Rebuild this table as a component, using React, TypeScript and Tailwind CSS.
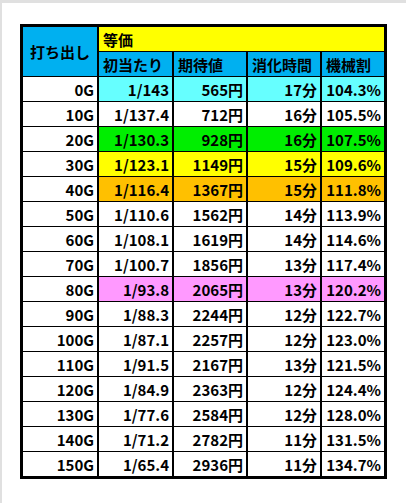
import React from "react";

type Row = { g: string; a: string; b: string; c: string; d: string; bg?: string };

const rows: Row[] = [
  { g: "0G", a: "1/143", b: "565円", c: "17分", d: "104.3%", bg: "bg-[#66ffff]" },
  { g: "10G", a: "1/137.4", b: "712円", c: "16分", d: "105.5%" },
  { g: "20G", a: "1/130.3", b: "928円", c: "16分", d: "107.5%", bg: "bg-[#00ee00]" },
  { g: "30G", a: "1/123.1", b: "1149円", c: "15分", d: "109.6%", bg: "bg-[#ffff00]" },
  { g: "40G", a: "1/116.4", b: "1367円", c: "15分", d: "111.8%", bg: "bg-[#ffc000]" },
  { g: "50G", a: "1/110.6", b: "1562円", c: "14分", d: "113.9%" },
  { g: "60G", a: "1/108.1", b: "1619円", c: "14分", d: "114.6%" },
  { g: "70G", a: "1/100.7", b: "1856円", c: "13分", d: "117.4%" },
  { g: "80G", a: "1/93.8", b: "2065円", c: "13分", d: "120.2%", bg: "bg-[#ff99ff]" },
  { g: "90G", a: "1/88.3", b: "2244円", c: "12分", d: "122.7%" },
  { g: "100G", a: "1/87.1", b: "2257円", c: "12分", d: "123.0%" },
  { g: "110G", a: "1/91.5", b: "2167円", c: "13分", d: "121.5%" },
  { g: "120G", a: "1/84.9", b: "2363円", c: "12分", d: "124.4%" },
  { g: "130G", a: "1/77.6", b: "2584円", c: "12分", d: "128.0%" },
  { g: "140G", a: "1/71.2", b: "2782円", c: "11分", d: "131.5%" },
  { g: "150G", a: "1/65.4", b: "2936円", c: "11分", d: "134.7%" },
];

const cell = "h-[24px] flex items-center justify-end pr-[3px] whitespace-nowrap";
const hcell = "h-[24px] flex items-center justify-start pl-[4px] bg-[#00b0f0] whitespace-nowrap";

export default function App() {
  return (
    <div
      className="min-h-[503px] bg-white border-t-[3px] border-l-[2px] border-[#e0e0e0] text-black font-bold text-[15px] leading-none"
      style={{ fontFamily: '"Noto Sans CJK JP", "Noto Sans", sans-serif' }}
    >
      <div className="pt-[21px] pl-[18px]">
        <div className="inline-grid grid-cols-[74px_73px_72px_72px_62px] bg-black p-[3px] gap-x-[2px] gap-y-[1px]">
          <div className="row-span-2 bg-[#00b0f0] flex items-center justify-center">打ち出し</div>
          <div className="col-span-4 h-[24px] flex items-center pl-[4px] bg-[#ffff00]">等価</div>
          <div className={hcell}>初当たり</div>
          <div className={hcell}>期待値</div>
          <div className={hcell}>消化時間</div>
          <div className={hcell}>機械割</div>
          {rows.map((r) => (
            <React.Fragment key={r.g}>
              <div className={`${cell} bg-white`}>{r.g}</div>
              <div className={`${cell} ${r.bg ?? "bg-white"}`}>{r.a}</div>
              <div className={`${cell} ${r.bg ?? "bg-white"}`}>{r.b}</div>
              <div className={`${cell} ${r.bg ?? "bg-white"}`}>{r.c}</div>
              <div className={`${cell} ${r.bg ?? "bg-white"}`}>{r.d}</div>
            </React.Fragment>
          ))}
        </div>
      </div>
    </div>
  );
}
